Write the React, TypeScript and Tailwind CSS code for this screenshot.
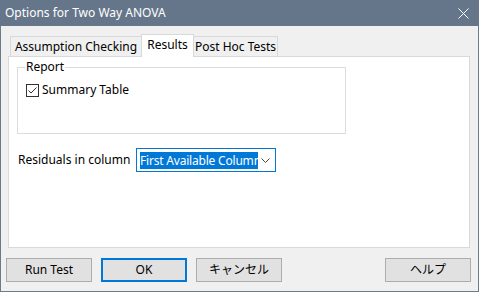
import React from "react";

const font = "font-['Noto_Sans','Noto_Sans_CJK_JP',sans-serif]";

const DialogButton: React.FC<{ label: string; primary?: boolean }> = ({ label, primary }) => (
  <button
    type="button"
    className={
      "w-[86px] h-[24px] bg-[#e1e1e1] text-[12px] text-black leading-none flex items-center justify-center " +
      (primary ? "border-2 border-[#0078d7]" : "border border-[#adadad]")
    }
  >
    {label}
  </button>
);

const App: React.FC = () => {
  return (
    <div className={`w-[479px] h-[292px] bg-[#f0f0f0] flex flex-col border-x border-b border-[#6b7a8c] ${font} text-[12px] text-black`}>
      {/* title bar */}
      <div className="h-[26px] -mx-px bg-[#66768a] flex items-center justify-between pl-[5px] pr-[10px] shrink-0">
        <span className="text-white">Options for Two Way ANOVA</span>
        <svg width="11" height="11" viewBox="0 0 11 11" className="text-white">
          <path d="M0.5 0.5 L10.5 10.5 M10.5 0.5 L0.5 10.5" stroke="currentColor" strokeWidth="1" />
        </svg>
      </div>

      {/* tabs + panel */}
      <div className="ml-[7px] w-[462px] mt-[8px] flex flex-col">
        <div className="flex items-end h-[23px] -mb-px">
          <div className="ml-[2px] w-[132px] h-[21px] border-t border-l border-r border-[#d9d9d9] flex items-center justify-center">
            Assumption Checking
          </div>
          <div className="-ml-px w-[53px] h-[23px] bg-white border-t border-l border-r border-[#d9d9d9] relative z-10 flex items-center justify-center pb-[2px]">
            Results
          </div>
          <div className="-ml-px w-[85px] h-[21px] border-t border-l border-r border-[#d9d9d9] flex items-center justify-center">
            Post Hoc Tests
          </div>
        </div>
        <div className="h-[192px] bg-white border border-[#d9d9d9] pl-[8px] pt-[2px] flex flex-col">
          <fieldset className="w-[329px] h-[75px] border border-[#dcdcdc] px-0">
            <legend className="ml-[7px] px-[1px] leading-[16px]">Report</legend>
            <label className="flex items-center ml-[8px] mt-[6px] gap-[3px]">
              <span className="w-[13px] h-[13px] border border-[#333333] bg-white flex items-center justify-center">
                <svg width="11" height="11" viewBox="0 0 11 11">
                  <path d="M1.5 5.5 L4 8 L9.5 2.5" stroke="#333333" strokeWidth="1" fill="none" />
                </svg>
              </span>
              <span>Summary Table</span>
            </label>
          </fieldset>

          <div className="flex items-center mt-[14px] ml-[1px]">
            <span className="w-[118px]">Residuals in column</span>
            <div className="w-[140px] h-[24px] border border-[#0078d7] bg-white flex items-center pl-[3px] pr-[5px]">
              <div className="w-[118px] h-[17px] bg-[#0078d7] text-white overflow-hidden whitespace-nowrap leading-[17px] tracking-[-0.2px]">
                First Available Column
              </div>
              <svg width="9" height="5" viewBox="0 0 9 5" className="ml-auto">
                <path d="M0.5 0.5 L4.5 4.5 L8.5 0.5" stroke="#444444" strokeWidth="1" fill="none" />
              </svg>
            </div>
          </div>
        </div>
      </div>

      {/* buttons */}
      <div className="flex mt-[10px] ml-[5px] gap-[9px]">
        <DialogButton label="Run Test" />
        <DialogButton label="OK" primary />
        <DialogButton label="キャンセル" />
        <div className="ml-[94px]">
          <DialogButton label="ヘルプ" />
        </div>
      </div>
    </div>
  );
};

export default App;
